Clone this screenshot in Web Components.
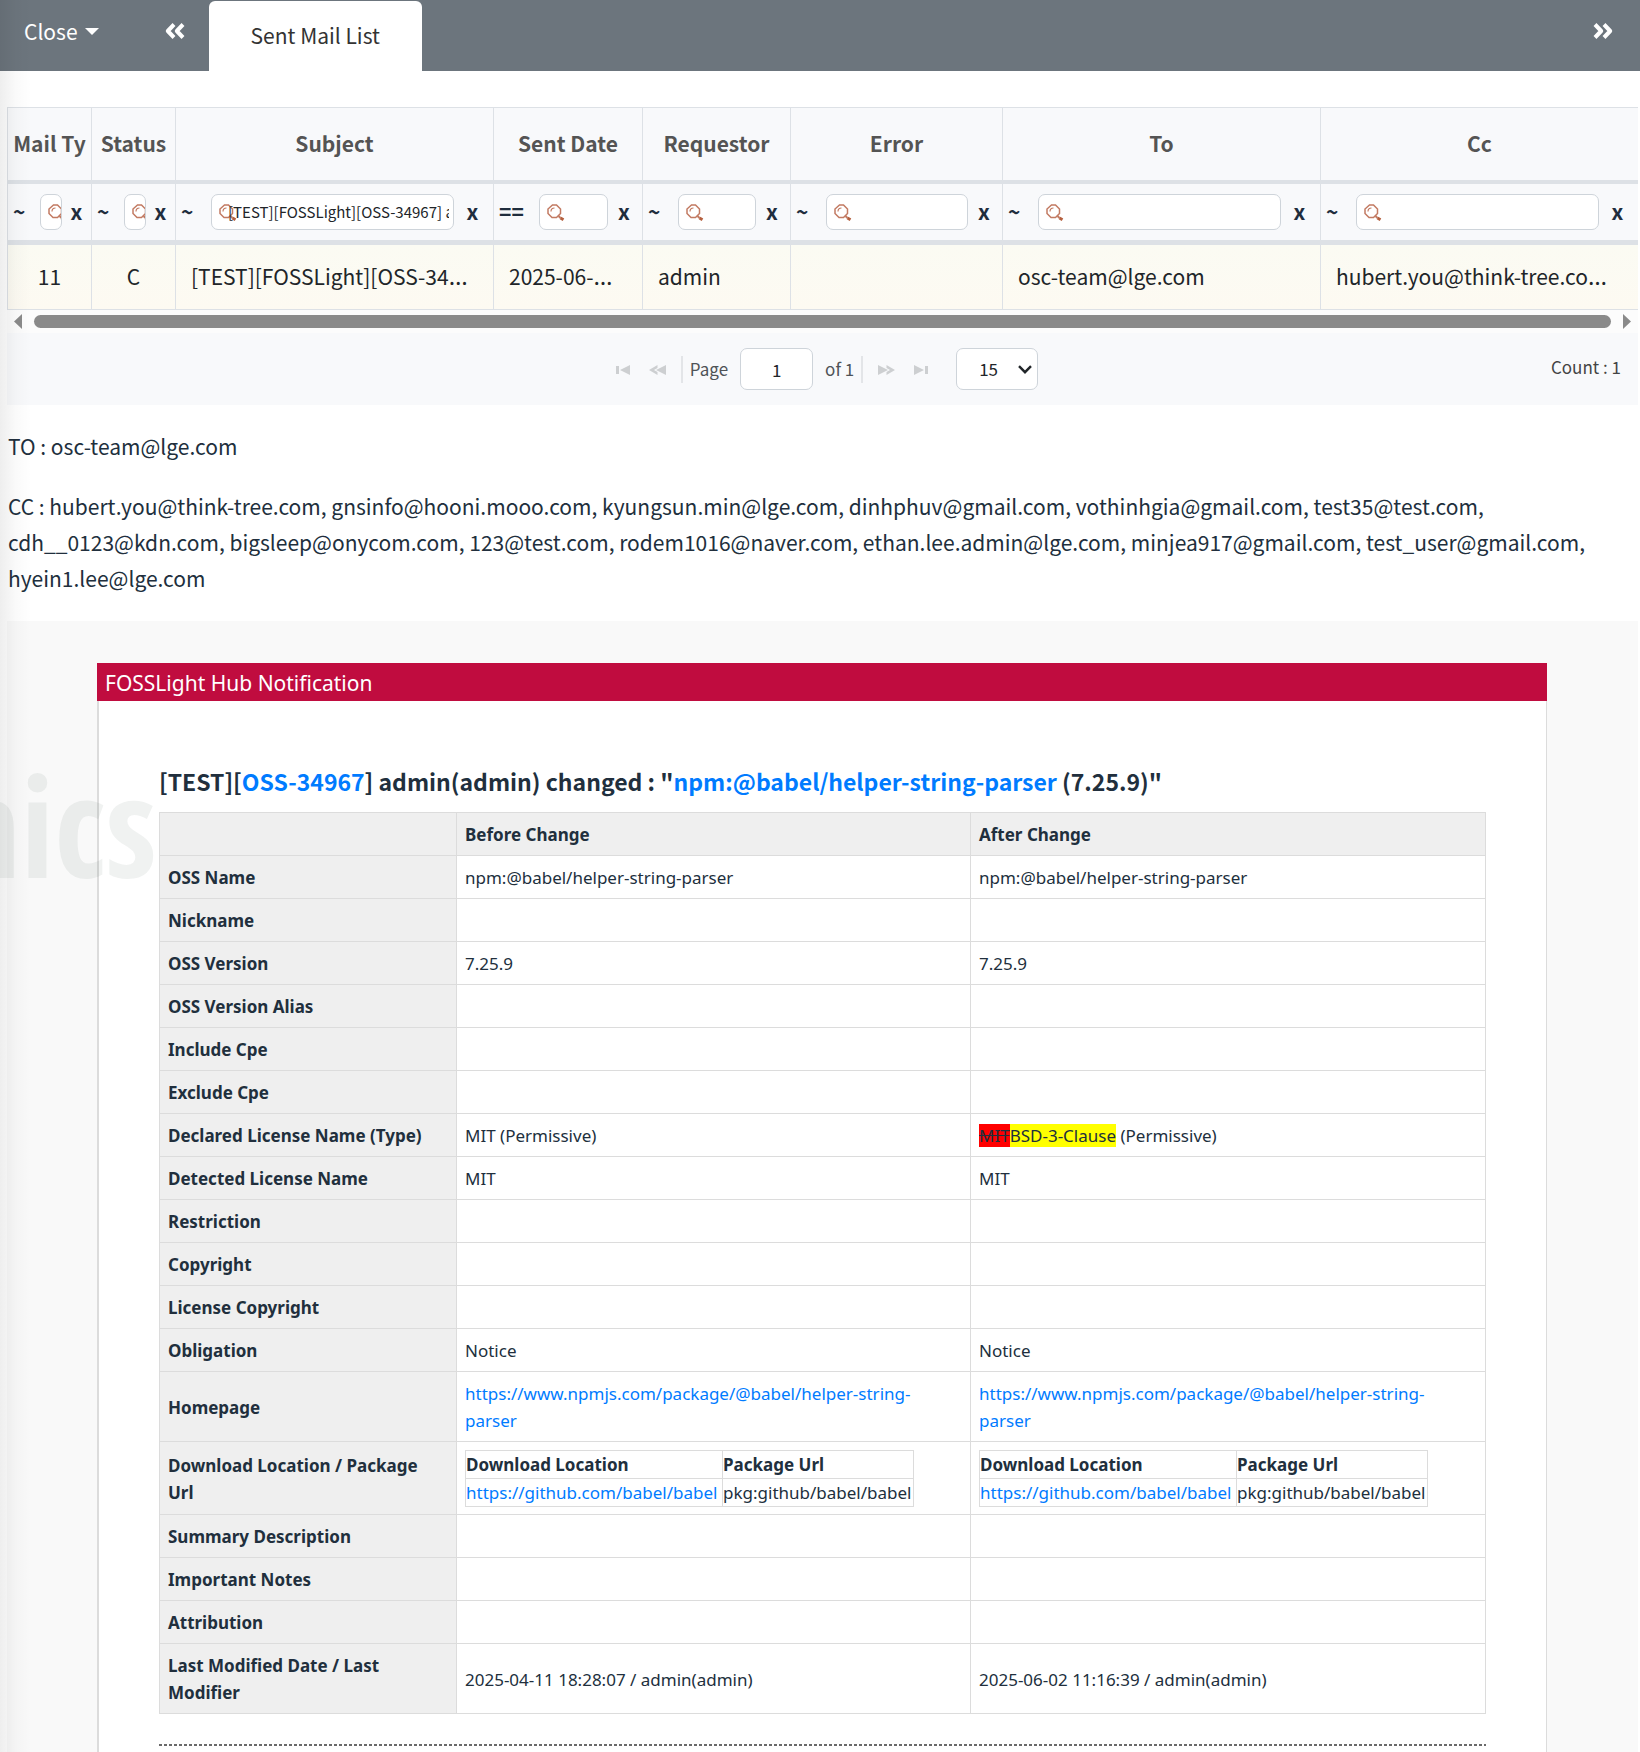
<!DOCTYPE html>
<html lang="en">
<head>
<meta charset="utf-8">
<title>Sent Mail List</title>
<style>
html, body { margin: 0; background: #fff; }
body { font-family: "Noto Sans CJK KR", "Noto Sans", sans-serif; color: #212f3d; }
</style>
</head>
<body>
<mail-app>
  <tab-bar slot="bar" current="Sent Mail List"></tab-bar>
  <sent-grid></sent-grid>
  <grid-pager></grid-pager>
  <mail-recipients>
    <p>TO : osc-team@lge.com</p>
    <p>CC : hubert.you@think-tree.com, gnsinfo@hooni.mooo.com, kyungsun.min@lge.com, dinhphuv@gmail.com, vothinhgia@gmail.com, test35@test.com, cdh__0123@kdn.com, bigsleep@onycom.com, 123@test.com, rodem1016@naver.com, ethan.lee.admin@lge.com, minjea917@gmail.com, test_user@gmail.com, hyein1.lee@lge.com</p>
  </mail-recipients>
  <mail-notice>
    <span slot="brand">FOSSLight Hub Notification</span>
    <change-table></change-table>
  </mail-notice>
</mail-app>

<script>
const define = (name, html) => customElements.define(name, class extends HTMLElement {
  constructor() {
    super();
    this.attachShadow({ mode: 'open' });
  }
  connectedCallback() {
    if (this.shadowRoot.childNodes.length) return;
    this.shadowRoot.innerHTML = typeof html === 'function' ? html(this) : html;
  }
});

define('mail-app', `
<style>
  :host { display: block; position: relative; }
  main { display: flex; flex-direction: column; padding: 36px 2px 0 7px; }
  .shade { position: absolute; inset: 0 auto 0 0; width: 32px; pointer-events: none;
    background: linear-gradient(90deg, rgba(0,0,0,.065), rgba(0,0,0,.02) 50%, rgba(0,0,0,0)); }
</style>
<slot name="bar"></slot>
<main><slot></slot></main>
<div class="shade"></div>`);

define('tab-bar', el => `
<style>
  :host { display: flex; align-items: flex-start; height: 71px; background: #6c757d; font-size: 21px; }
  button { display: flex; align-items: center; height: 62px; padding: 0; border: 0; background: none; color: #fff; font: inherit; line-height: 60px; }
  .close { gap: 7px; padding-left: 24px; }
  .prev { margin: 0 24px 0 66px; }
  .next { margin: 0 27px 0 auto; }
  .tab { display: block; margin-top: 1px; height: 70px; padding: 0 42px; line-height: 68px; border-radius: 6px 6px 0 0; background: #fff; color: #333; text-decoration: none; }
</style>
<button class="close">Close<svg width="14" height="7"><path d="M0 0h14L7 7z" fill="#fff"/></svg></button>
<button class="prev" aria-label="Previous tabs"><svg width="20" height="16" viewBox="0 0 20 16" fill="none" stroke="#fff" stroke-width="4" stroke-linejoin="round"><path d="M9 1.500 2.800 8 9 14.500M18 1.500 11.800 8 18 14.500"/></svg></button>
<a class="tab" href="#">${el.getAttribute('current')}</a>
<button class="next" aria-label="Next tabs"><svg width="20" height="16" viewBox="0 0 20 16" fill="none" stroke="#fff" stroke-width="4" stroke-linejoin="round"><path d="M2 1.500 8.200 8 2 14.500M11 1.500 17.200 8 11 14.500"/></svg></button>`);

/* Column filter: operator, search box with lens, clear button. */
define('column-filter', el => `
<style>
  :host { display: flex; align-items: center; height: 56px; font-size: 21px; font-weight: 700; color: #1f2d3d; }
  button { box-sizing: border-box; border: 0; padding: 0 0 2px; background: none; font: inherit; line-height: 34px; color: inherit; flex: none; }
  .op { width: 35px; padding-left: 5px; text-align: left; }
  .clear { width: 34px; padding-right: 2px; text-align: center; }
  :host([size=narrow]) .op { width: 32px; }
  :host([size=narrow]) .clear { width: 29px; padding-right: 0; }
  :host([size=wide]) .clear { width: 39px; }
  :host([op="=="]) .op { width: 45px; }
  .box { flex: 1; min-width: 0; display: grid; box-sizing: border-box; height: 36px; overflow: hidden; border: 1px solid #ced4da; border-radius: 7px; background: #fff; }
  .box > * { grid-area: 1 / 1; }
  svg { margin: 9px 0 0 7px; pointer-events: none; }
  input { box-sizing: border-box; width: 100%; min-width: 0; height: 34px; margin: 0; padding: 0 4px 0 16px; border: 0; outline: 0; background: none; font: 400 15px/34px "Noto Sans CJK KR", sans-serif; color: #212529; }
</style>
<button class="op" aria-label="Operator">${el.getAttribute('op')}</button>
<span class="box">
  <svg width="18" height="18" viewBox="0 0 18 18" fill="none" stroke="#c27a62"><path d="M5.500 1h4l4 4v4.500l-4 4h-4.500l-4-4v-4.500z" stroke-width="1.500"/><path d="M4 7.500c0-2 1.500-3.500 3.500-3.500" stroke-width="1.200"/><path d="m11.500 12 2 2" stroke-width="2"/><path d="m13.500 14 3 1.800" stroke="#b5603f" stroke-width="3"/></svg>
  <input type="text" aria-label="Filter ${el.getAttribute('name')}" value="${el.getAttribute('value') || ''}">
</span>
<button class="clear" aria-label="Clear filter">x</button>`);

const columns = [
  ['Mail Ty', 84, '~', 'narrow', '11'],
  ['Status', 84, '~', 'narrow', 'C'],
  ['Subject', 318, '~', 'wide', '[TEST][FOSSLight][OSS-34<span>…</span>', '[TEST][FOSSLight][OSS-34967] admin(admin) changed'],
  ['Sent Date', 149, '==', 'mid', '2025-06-<span>…</span>'],
  ['Requestor', 148, '~', 'mid', 'admin'],
  ['Error', 212, '~', 'mid', ''],
  ['To', 318, '~', 'wide', 'osc-team@lge.com'],
  ['Cc', 317, '~', 'wide', 'hubert.you@think-tree.co<span>…</span>']
];
define('sent-grid', `
<style>
  :host { display: block; font-size: 21px; }
  table { width: 100%; table-layout: fixed; border-collapse: separate; border-spacing: 0; border-left: 1px solid #dde1e6; }
  th, td { padding: 0; overflow: hidden; white-space: nowrap; border-right: 1px solid #dde1e6; background: #f8f9fb; }
  th:last-child, td:last-child { border-right: 0; }
  thead th { height: 72px; line-height: 70px; vertical-align: top; border-top: 1px solid #dde1e6; border-bottom: 4px solid #dde1e6; color: #545454; }
  .filters td { border-bottom: 5px solid #dde1e6; }
  .row td { height: 64px; line-height: 62px; vertical-align: top; padding-left: 15px; border-bottom: 1px solid #dde1e6; background: linear-gradient(#fbfbf3, #fdfaf2); color: #212529; }
  .row td:nth-child(-n+2) { padding: 0; text-align: center; }
  .row span { font-family: "Noto Sans", sans-serif; font-size: 24px; }
  .scroll { display: flex; align-items: center; gap: 12px; height: 23px; padding: 0 7px; background: #fcfcfc; }
  .thumb { flex: 1; height: 13px; border-radius: 7px; background: #8a8a8a; }
</style>
<table>
  <colgroup>${columns.map(c => `<col style="width:${c[1]}px">`).join('')}</colgroup>
  <thead><tr>${columns.map(c => `<th scope="col">${c[0]}</th>`).join('')}</tr></thead>
  <tbody>
    <tr class="filters">${columns.map(c => `<td><column-filter name="${c[0]}" op="${c[2]}" size="${c[3]}" value="${c[5] || ''}"></column-filter></td>`).join('')}</tr>
    <tr class="row">${columns.map(c => `<td>${c[4]}</td>`).join('')}</tr>
  </tbody>
</table>
<div class="scroll">
  <svg width="8" height="15"><path d="M8 0v15L0 7.500z" fill="#8a8a8a"/></svg>
  <div class="thumb"></div>
  <svg width="8" height="15"><path d="M0 0v15l8-7.500z" fill="#8a8a8a"/></svg>
</div>`);

define('grid-pager', `
<style>
  :host { display: grid; grid-template-columns: 1fr auto 1fr; align-items: center; height: 72px; padding: 0 17px; background: #f8f9fb; font-size: 17px; line-height: 26px; color: #4f5357; }
  nav { grid-column: 2; display: flex; align-items: center; }
  .count { justify-self: end; padding-bottom: 4px; color: #444; }
  button { display: flex; justify-content: center; align-items: center; width: 32px; height: 32px; padding: 2px 0 0; border: 0; background: none; color: #cdcfd1; }
  button + button { margin-left: 3px; }
  i { width: 2px; height: 27px; margin: 0 7px; background: #e3e5e8; }
  label { display: flex; align-items: center; gap: 12px; }
  input, select { box-sizing: border-box; height: 42px; border: 1px solid #ced4da; border-radius: 7px; background: #fff; font: inherit; color: #212529; margin: 0; }
  input { width: 73px; padding: 0; text-align: center; }
  .of { margin-left: 12px; }
  .size { display: grid; align-items: center; margin-left: 19px; }
  .size > * { grid-area: 1 / 1; }
  select { appearance: none; width: 82px; padding: 0 0 0 22px; }
  .size svg { justify-self: end; margin-right: 6px; pointer-events: none; }
</style>
<nav aria-label="Pages">
  <button aria-label="First page"><svg width="14" height="10" fill="currentColor"><path d="M0 1h3v8H0zM14 0v10L4 5z"/></svg></button>
  <button aria-label="Previous page"><svg width="17" height="10" fill="currentColor"><path d="M8.500 0v3L5 5l3.500 2v3L0 5zM17 0v10L7 5z"/></svg></button>
  <i></i>
  <label>Page <input type="text" value="1"></label>
  <span class="of">of 1</span>
  <i></i>
  <button aria-label="Next page"><svg width="17" height="10" fill="currentColor"><path d="M8.500 0v3l3.500 2-3.500 2v3l8.500-5zM0 0v10l10-5z"/></svg></button>
  <button aria-label="Last page"><svg width="14" height="10" fill="currentColor"><path d="M11 1h3v8h-3zM0 0v10l10-5z"/></svg></button>
  <span class="size">
    <select aria-label="Rows per page"><option>15</option></select>
    <svg width="14" height="9" fill="none" stroke="#212529" stroke-width="2.400"><path d="m1 1.200 6 6 6-6"/></svg>
  </span>
</nav>
<span class="count">Count : 1</span>`);

define('mail-recipients', `
<style>
  :host { display: flex; flex-direction: column; gap: 24px; padding: 23px 0 25px 1px; font-size: 21px; line-height: 36px; }
  ::slotted(p) { margin: 0; }
</style>
<slot></slot>`);

define('mail-notice', `
<style>
  :host { display: block; position: relative; padding: 42px 91px 0 90px; background: #f9f9f9; font-family: "Noto Sans", sans-serif; }
  header { padding: 2px 8px 0; background: #c00c3f; color: #fff; font-size: 21px; line-height: 36px; }
  section { padding: 62px 60px 6px; border: solid #dcdcdc; border-width: 0 1px 0 2px; background: #fff; }
  h2 { margin: 0 0 13px; font: 700 23px/36px "Noto Sans CJK KR", "Noto Sans", sans-serif; white-space: nowrap; }
  a { color: #007bff; text-decoration: none; }
  hr { height: 2px; margin: 30px 0 0; border: 0; background: repeating-linear-gradient(90deg, #6a6a6a 0 3px, transparent 3px 5px); }
  .mark { position: absolute; left: -7px; top: 134px; width: 157px; display: flex; justify-content: flex-end; overflow: hidden; font: 700 138px/138px "Open Sans Condensed", "Open Sans", sans-serif; color: rgba(40, 70, 60, .07); pointer-events: none; }
</style>
<header><slot name="brand"></slot></header>
<section>
  <h2>[TEST][<a href="#">OSS-34967</a>] admin(admin) changed : "<a href="#">npm:@babel/helper-string-parser</a> (7.25.9)"</h2>
  <slot></slot>
  <hr>
</section>
<div class="mark" aria-hidden="true">nics</div>`);

define('package-table', `
<style>
  :host { display: block; }
  table { width: 449px; max-width: 100%; table-layout: fixed; border-collapse: collapse; }
  th, td { padding: 0; border: 1px solid #dcdcdc; text-align: left; line-height: 27px; white-space: nowrap; }
  th:first-child { width: 256px; }
  a { color: #007bff; text-decoration: none; }
</style>
<table>
  <tr><th scope="col">Download Location</th><th scope="col">Package Url</th></tr>
  <tr><td><a href="#">https://github.com/babel/babel</a></td><td>pkg:github/babel/babel</td></tr>
</table>`);

const home = '<a href="#">https://www.npmjs.com/package/@babel/helper-string-parser</a>';
const pack = '<package-table></package-table>';
const changes = [
  ['OSS Name', 'npm:@babel/helper-string-parser', 'npm:@babel/helper-string-parser'],
  ['Nickname'],
  ['OSS Version', '7.25.9', '7.25.9'],
  ['OSS Version Alias'],
  ['Include Cpe'],
  ['Exclude Cpe'],
  ['Declared License Name (Type)', 'MIT (Permissive)', '<del>MIT</del><ins>BSD-3-Clause</ins> (Permissive)'],
  ['Detected License Name', 'MIT', 'MIT'],
  ['Restriction'],
  ['Copyright'],
  ['License Copyright'],
  ['Obligation', 'Notice', 'Notice'],
  ['Homepage', home, home],
  ['Download Location / Package Url', pack, pack],
  ['Summary Description'],
  ['Important Notes'],
  ['Attribution'],
  ['Last Modified Date / Last Modifier', '2025-04-11 18:28:07 / admin(admin)', '2025-06-02 11:16:39 / admin(admin)']
];
define('change-table', `
<style>
  :host { display: block; font-size: 17px; line-height: 27px; }
  table { width: 100%; table-layout: fixed; border-collapse: collapse; }
  th, td { height: 27px; padding: 8px 16px 7px 8px; border: 1px solid #dcdcdc; text-align: left; }
  th { background: #efefef; }
  a { color: #007bff; text-decoration: none; }
  del { background: #f00; }
  ins { background: #ff0; text-decoration: none; }
</style>
<table>
  <colgroup><col style="width:297px"><col style="width:514px"><col style="width:515px"></colgroup>
  <thead><tr><th></th><th scope="col">Before Change</th><th scope="col">After Change</th></tr></thead>
  <tbody>${changes.map(([n, a = '', b = '']) => `<tr><th scope="row">${n}</th><td>${a}</td><td>${b}</td></tr>`).join('')}</tbody>
</table>`);
</script>
</body>
</html>
